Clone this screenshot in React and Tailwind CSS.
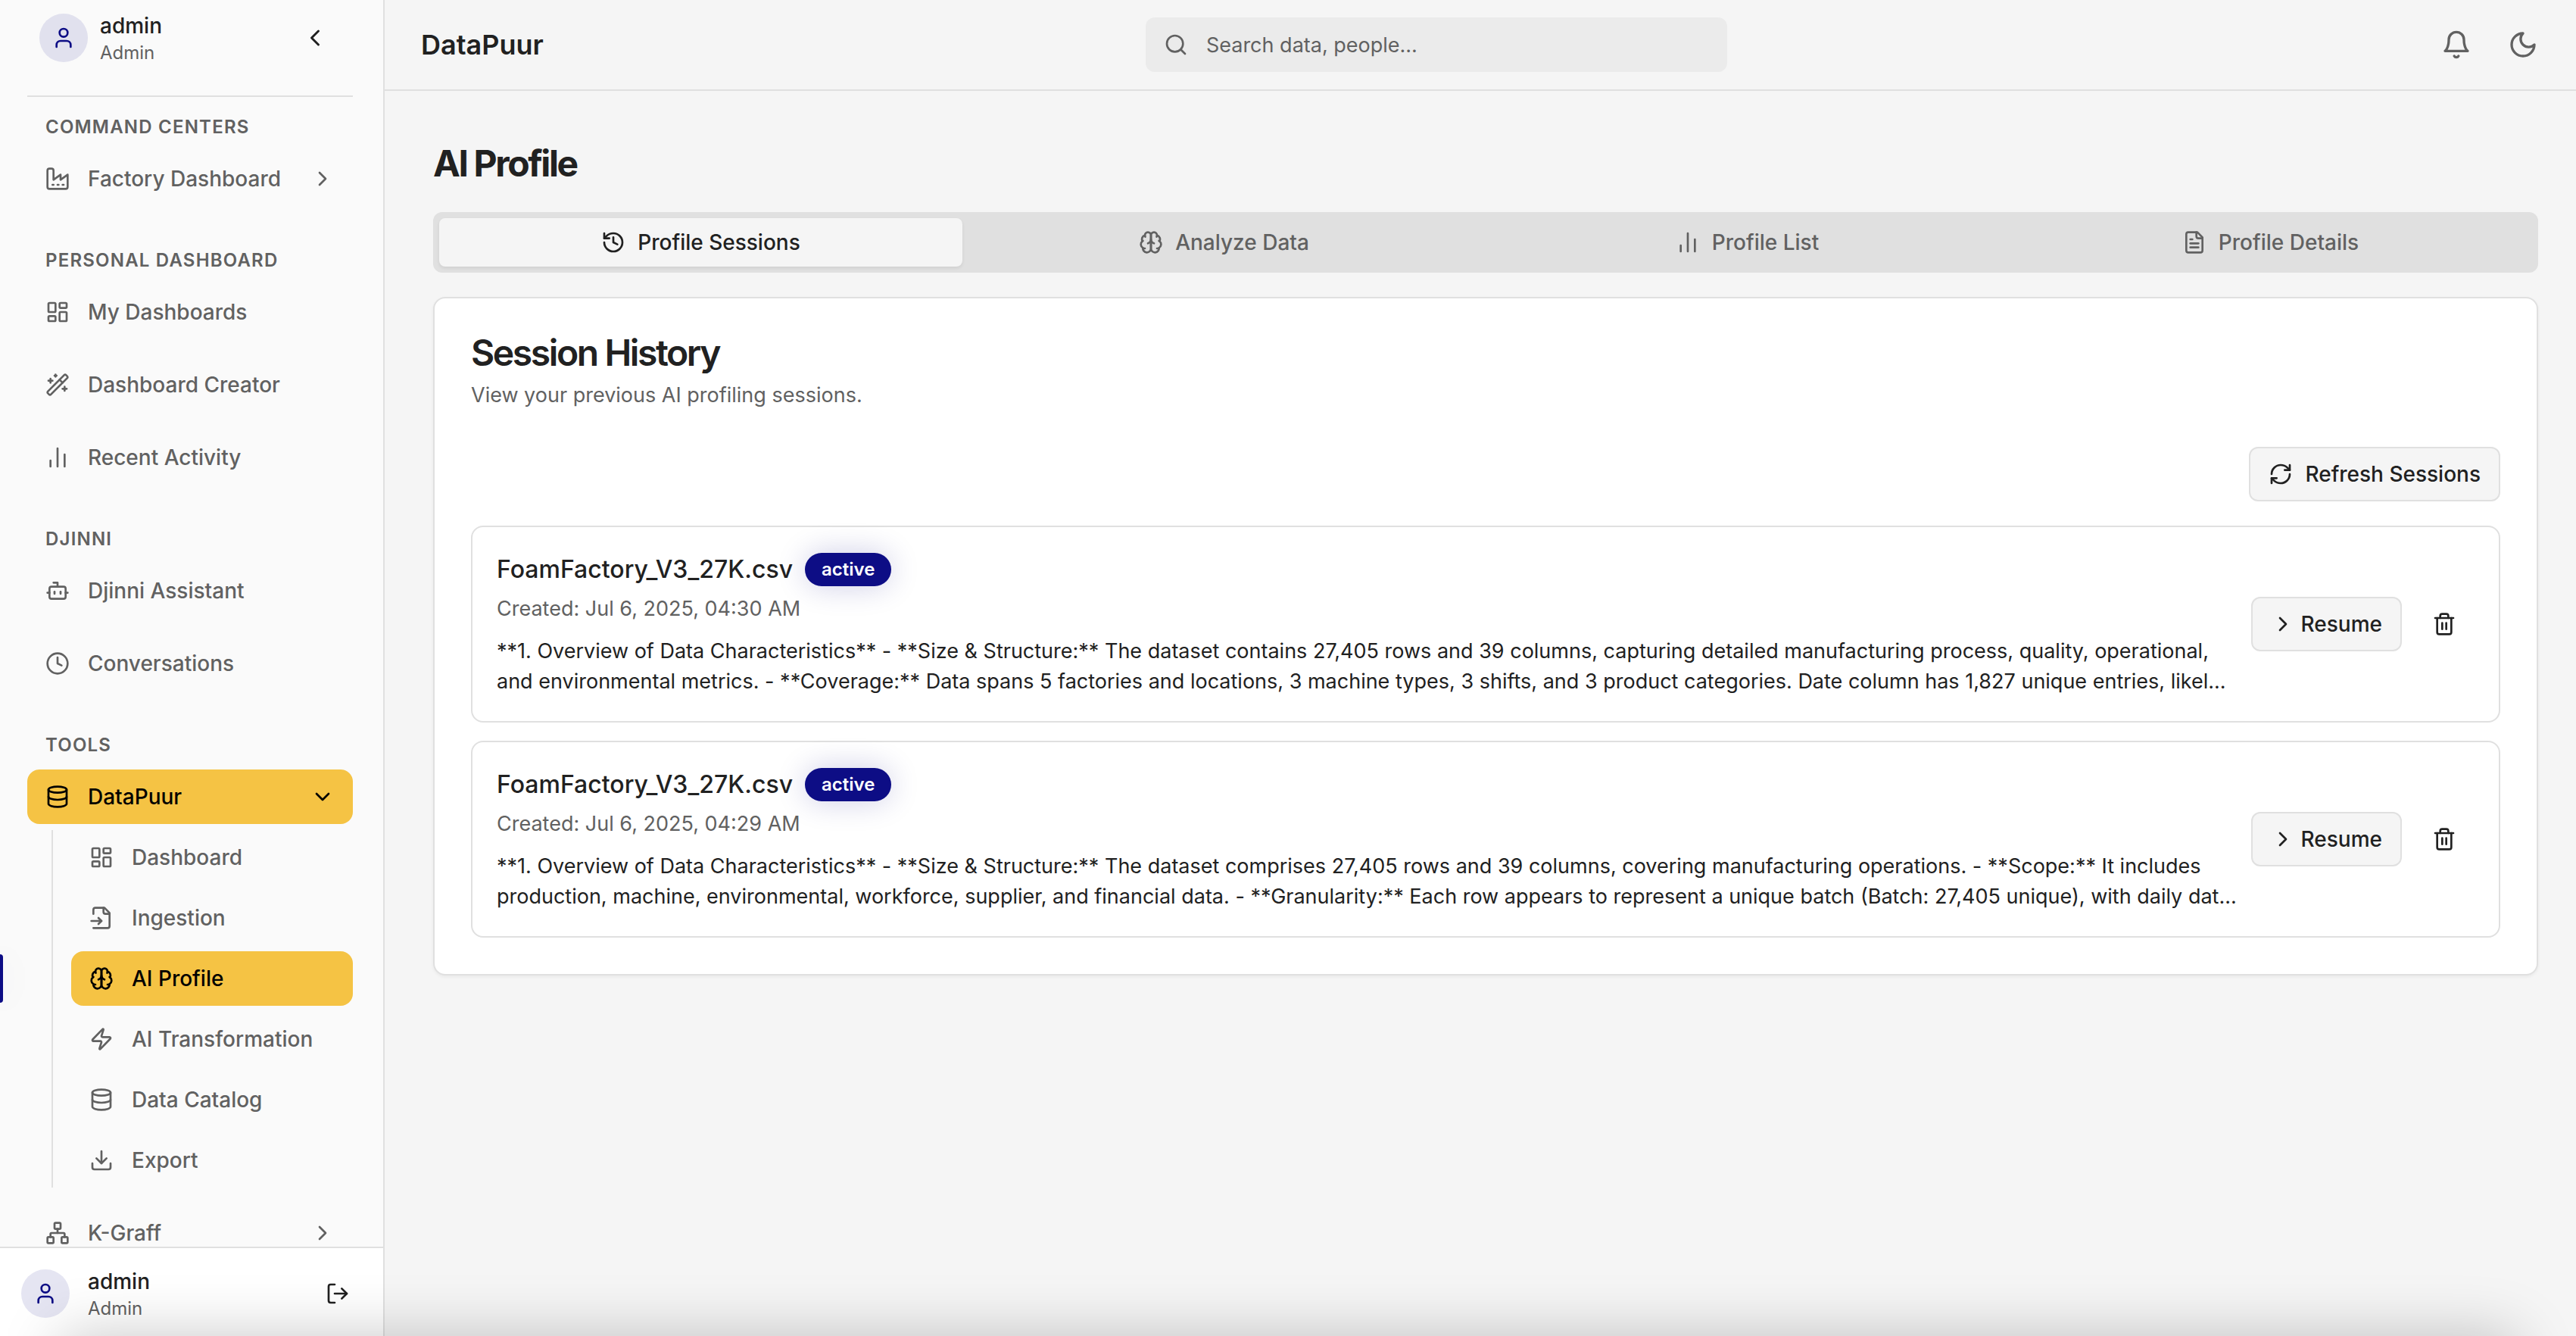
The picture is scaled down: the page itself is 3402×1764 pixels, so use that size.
import {
  BarChart2, Bot, ChevronDown, ChevronLeft, ChevronRight, Clock, Database, Download,
  History, LayoutDashboard, LogOut, Network, RefreshCw, Search, Trash2, User, WandSparkles, Zap,
} from "lucide-react";

function makeIcon(paths) {
  return function Icon({ className }) {
    return (
      <svg
        viewBox="0 0 24 24"
        fill="none"
        stroke="currentColor"
        strokeWidth="2"
        strokeLinecap="round"
        strokeLinejoin="round"
        aria-hidden="true"
        className={className}
      >
        {paths.map((d) => (
          <path key={d} d={d} />
        ))}
      </svg>
    );
  };
}

const Factory = makeIcon([
  "M2 20a2 2 0 0 0 2 2h16a2 2 0 0 0 2-2V8l-7 5V8l-7 5V4a2 2 0 0 0-2-2H4a2 2 0 0 0-2 2Z",
  "M17 18h1",
  "M12 18h1",
  "M7 18h1",
]);
const FileInput = makeIcon([
  "M4 22h14a2 2 0 0 0 2-2V7l-5-5H6a2 2 0 0 0-2 2v4",
  "M14 2v4a2 2 0 0 0 2 2h4",
  "M2 15h10",
  "m9 18 3-3-3-3",
]);
const FileText = makeIcon([
  "M15 2H6a2 2 0 0 0-2 2v16a2 2 0 0 0 2 2h12a2 2 0 0 0 2-2V7Z",
  "M14 2v4a2 2 0 0 0 2 2h4",
  "M10 9H8",
  "M16 13H8",
  "M16 17H8",
]);
const Brain = makeIcon([
  "M12 5a3 3 0 1 0-5.997.125 4 4 0 0 0-2.526 5.77 4 4 0 0 0 .556 6.588A4 4 0 1 0 12 18Z",
  "M12 5a3 3 0 1 1 5.997.125 4 4 0 0 1 2.526 5.77 4 4 0 0 1-.556 6.588A4 4 0 1 1 12 18Z",
  "M15 13a4.5 4.5 0 0 1-3-4 4.5 4.5 0 0 1-3 4",
  "M17.599 6.5a3 3 0 0 0 .399-1.375",
  "M6.003 5.125A3 3 0 0 0 6.401 6.5",
  "M3.477 10.896a4 4 0 0 1 .585-.396",
  "M19.938 10.5a4 4 0 0 1 .585.396",
  "M6 18a4 4 0 0 1-1.967-.516",
  "M19.967 17.484A4 4 0 0 1 18 18",
]);
const Bell = makeIcon(["M6 8a6 6 0 0 1 12 0c0 7 3 9 3 9H3s3-2 3-9", "M10.3 21a1.94 1.94 0 0 0 3.4 0"]);
const Moon = makeIcon(["M12 3a6 6 0 0 0 9 9 9 9 0 1 1-9-9Z"]);

const sections = [
  { title: "Command Centers", items: [{ label: "Factory Dashboard", icon: Factory, expandable: true }] },
  {
    title: "Personal Dashboard",
    items: [
      { label: "My Dashboards", icon: LayoutDashboard },
      { label: "Dashboard Creator", icon: WandSparkles },
      { label: "Recent Activity", icon: BarChart2 },
    ],
  },
  {
    title: "Djinni",
    items: [
      { label: "Djinni Assistant", icon: Bot },
      { label: "Conversations", icon: Clock },
    ],
  },
  {
    title: "Tools",
    items: [
      {
        label: "DataPuur",
        icon: Database,
        open: true,
        children: [
          { label: "Dashboard", icon: LayoutDashboard },
          { label: "Ingestion", icon: FileInput },
          { label: "AI Profile", icon: Brain, active: true },
          { label: "AI Transformation", icon: Zap },
          { label: "Data Catalog", icon: Database },
          { label: "Export", icon: Download },
        ],
      },
      { label: "K-Graff", icon: Network, expandable: true },
    ],
  },
];

const tabs = [
  { label: "Profile Sessions", icon: History, active: true },
  { label: "Analyze Data", icon: Brain },
  { label: "Profile List", icon: BarChart2 },
  { label: "Profile Details", icon: FileText },
];

const sessions = [
  {
    file: "FoamFactory_V3_27K.csv",
    created: "Jul 6, 2025, 04:30 AM",
    summary:
      "**1. Overview of Data Characteristics** - **Size & Structure:** The dataset contains 27,405 rows and 39 columns, capturing detailed manufacturing process, quality, operational, and environmental metrics. - **Coverage:** Data spans 5 factories and locations, 3 machine types, 3 shifts, and 3 product categories. Date column has 1,827 unique entries, likel...",
  },
  {
    file: "FoamFactory_V3_27K.csv",
    created: "Jul 6, 2025, 04:29 AM",
    summary:
      "**1. Overview of Data Characteristics** - **Size & Structure:** The dataset comprises 27,405 rows and 39 columns, covering manufacturing operations. - **Scope:** It includes production, machine, environmental, workforce, supplier, and financial data. - **Granularity:** Each row appears to represent a unique batch (Batch: 27,405 unique), with daily dat...",
  },
];

function UserBadge({ gap }) {
  return (
    <div className={`flex items-center ${gap}`}>
      <div className="flex size-16 items-center justify-center rounded-full bg-[#000080]/10 text-[#0d0d85]">
        <User className="size-8" />
      </div>
      <div>
        <p className="text-[28px] leading-10 font-medium text-[#212121]">admin</p>
        <p className="text-2xl leading-8 text-[#616161]">Admin</p>
      </div>
    </div>
  );
}

function NavLink({ item }) {
  const Icon = item.icon;
  const tone = item.active ? "bg-[#f5c344] text-black" : "text-[#616161]";
  return (
    <a href="#" className={`flex h-18 items-center gap-6 rounded-2xl px-6 text-[28px] leading-10 font-medium ${tone}`}>
      <Icon className="size-8 shrink-0" />
      <span>{item.label}</span>
    </a>
  );
}

function NavItem({ item }) {
  if (!item.expandable && !item.open) return <NavLink item={item} />;
  const Icon = item.icon;
  const Chevron = item.open ? ChevronDown : ChevronRight;
  const tone = item.open ? "bg-[#f5c344] text-black" : "text-[#616161]";
  return (
    <div>
      <button
        type="button"
        aria-expanded={Boolean(item.open)}
        className={`flex h-18 w-full items-center gap-6 rounded-2xl px-6 text-[28px] leading-10 font-medium ${tone}`}
      >
        <Icon className="size-8 shrink-0" />
        <span>{item.label}</span>
        <Chevron className="ml-auto size-8" />
      </button>
      {item.children && (
        <ul className="mt-2 ml-8 flex flex-col gap-2 border-l-2 border-[#e0e0e0] pl-6">
          {item.children.map((child) => (
            <li key={child.label}>
              <NavLink item={child} />
            </li>
          ))}
        </ul>
      )}
    </div>
  );
}

function Sidebar() {
  return (
    <aside className="relative flex w-[508px] shrink-0 flex-col border-r-2 border-[#e0e0e0] bg-[#fafafa]">
      <div className="flex min-h-0 flex-1 flex-col overflow-hidden pr-10 pl-9">
        <div className="flex shrink-0 items-center justify-between border-b-2 border-[#e0e0e0] pt-[14px] pr-8 pb-10 pl-4">
          <UserBadge gap="gap-4" />
          <button type="button" aria-label="Collapse sidebar" className="text-[#212121]">
            <ChevronLeft className="size-9" />
          </button>
        </div>
        <nav className="flex flex-col gap-14 pt-6">
          {sections.map((section) => (
            <section key={section.title}>
              <h2 className="px-6 text-2xl leading-8 font-semibold tracking-wider text-[#616161] uppercase">
                {section.title}
              </h2>
              <div className="mt-4 flex flex-col gap-6">
                {section.items.map((item) => (
                  <NavItem key={item.label} item={item} />
                ))}
              </div>
            </section>
          ))}
        </nav>
      </div>
      <div className="flex h-[118px] shrink-0 items-center justify-between border-t-2 border-[#e0e0e0] bg-white pt-1 pr-11 pl-7">
        <UserBadge gap="gap-6" />
        <button type="button" aria-label="Log out" className="text-[#212121]">
          <LogOut className="size-8" />
        </button>
      </div>
      <span className="absolute top-[1260px] left-0 h-16 w-1 rounded-r-lg bg-[#0d0d85] shadow-[0_0_40px_rgba(0,0,128,0.15)]" />
    </aside>
  );
}

function Header() {
  return (
    <header className="flex h-[120px] shrink-0 items-center border-b-2 border-[#e0e0e0] pr-[34px] pl-12">
      <h1 className="text-4xl leading-14 font-semibold text-[#212121]">DataPuur</h1>
      <div className="flex flex-1 justify-center">
        <div className="relative w-full max-w-3xl">
          <Search className="absolute top-5 left-6 size-8 text-[#616161]" />
          <input
            type="search"
            aria-label="Search data, people"
            placeholder="Search data, people..."
            className="h-18 w-full rounded-xl bg-[#ebebeb] pr-6 pl-20 text-[27px] text-[#212121] placeholder:text-[#616161]"
          />
        </div>
      </div>
      <div className="flex w-[292px] justify-end gap-4 text-[#616161]">
        <button type="button" aria-label="Notifications" className="flex size-18 items-center justify-center">
          <Bell className="size-10" />
        </button>
        <button type="button" aria-label="Toggle dark mode" className="flex size-18 items-center justify-center">
          <Moon className="size-10" />
        </button>
      </div>
    </header>
  );
}

function SessionCard({ session }) {
  return (
    <article className="flex items-center rounded-2xl border-2 border-[#e0e0e0] p-8">
      <div className="min-w-0 flex-1 pr-2">
        <div className="flex items-center gap-4">
          <h4 className="text-[32px] leading-12 font-medium">{session.file}</h4>
          <span className="rounded-full bg-[#0d0d85] px-[22px] py-[6px] text-2xl leading-8 font-semibold text-white shadow-[0_0_40px_rgba(0,0,128,0.2)]">
            active
          </span>
        </div>
        <p className="mt-2 text-[27px] leading-10 text-[#616161]">Created: {session.created}</p>
        <p className="mt-4 line-clamp-2 text-[27px] leading-10">{session.summary}</p>
      </div>
      <button
        type="button"
        className="flex h-18 items-center gap-2 rounded-xl border-2 border-[#e0e0e0] bg-[#f5f5f5] px-6 text-[28px] leading-10 font-medium"
      >
        <ChevronRight className="size-8" />
        Resume
      </button>
      <button type="button" aria-label="Delete session" className="ml-4 flex h-18 items-center px-6">
        <Trash2 className="size-8" />
      </button>
    </article>
  );
}

export default function App() {
  return (
    <div className="relative flex h-screen overflow-hidden bg-[#f5f5f5] font-['Inter',sans-serif] text-[#212121]">
      <Sidebar />
      <div className="flex min-w-0 flex-1 flex-col">
        <Header />
        <main className="flex-1 pt-16 pr-[50px] pl-16">
          <h2 className="text-5xl leading-16 font-bold tracking-tighter">AI Profile</h2>
          <div role="tablist" className="mt-8 grid h-20 grid-cols-4 rounded-xl bg-[#e0e0e0] p-2">
            {tabs.map(({ label, icon: Icon, active }) => (
              <button
                key={label}
                type="button"
                role="tab"
                aria-selected={Boolean(active)}
                className={`flex items-center justify-center gap-4 rounded-lg text-[28px] leading-10 font-medium ${
                  active ? "bg-[#f5f5f5] text-[#212121] shadow-[0_2px_4px_rgba(0,0,0,0.08)]" : "text-[#616161]"
                }`}
              >
                <Icon className="size-8" />
                {label}
              </button>
            ))}
          </div>
          <section className="mt-8 rounded-2xl border-2 border-[#e0e0e0] bg-white p-12 shadow-[0_2px_4px_rgba(0,0,0,0.05)]">
            <h3 className="text-5xl leading-none font-semibold tracking-tighter">Session History</h3>
            <p className="mt-3 text-[27px] leading-10 text-[#616161]">View your previous AI profiling sessions.</p>
            <div className="mt-12 flex justify-end">
              <button
                type="button"
                className="flex h-18 items-center gap-4 rounded-xl border-2 border-[#e0e0e0] bg-[#f5f5f5] px-6 text-[28px] leading-10 font-medium"
              >
                <RefreshCw className="size-8" />
                Refresh Sessions
              </button>
            </div>
            <div className="mt-8 flex flex-col gap-6">
              {sessions.map((session) => (
                <SessionCard key={session.created} session={session} />
              ))}
            </div>
          </section>
        </main>
      </div>
      <div className="pointer-events-none absolute right-20 -bottom-40 left-20 h-40 shadow-[0_0_80px_rgba(0,0,0,0.22)]" />
    </div>
  );
}
